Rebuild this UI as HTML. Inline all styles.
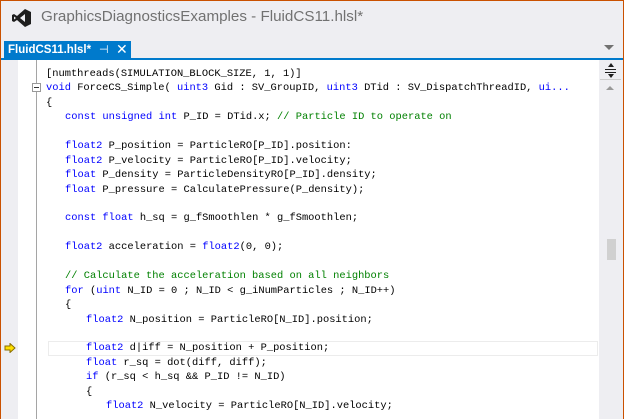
<!DOCTYPE html>
<html><head><meta charset="utf-8"><style>
*{margin:0;padding:0;box-sizing:border-box}
body{width:624px;height:419px;overflow:hidden;background:#eeeef2;position:relative;font-family:"Liberation Sans",sans-serif}
.bd{position:absolute;inset:0;border:1px solid #ca5100;border-bottom:none;pointer-events:none;z-index:10}
.title{position:absolute;left:41px;top:8px;font-size:15.2px;color:#717171}
.tab{position:absolute;left:4px;top:41px;width:127px;height:18px;background:#007acc;color:#fff;font-size:11.5px;font-weight:bold;line-height:18px;padding-left:4px}
.tab span{position:absolute;font-weight:normal}
.bl{position:absolute;left:1px;right:1px;top:58px;height:2px;background:#007acc}
.ed{position:absolute;left:18px;top:60px;width:581px;height:359px;background:#fff}
.gut{position:absolute;left:36px;top:60px;width:1px;height:359px;background:#a5a5a5}
.sb{position:absolute;left:599px;top:60px;width:23px;height:359px;background:#eeeef2}
.code{position:absolute;left:0;top:67px;font-family:"Liberation Mono",monospace;font-size:10.4px;color:#000;white-space:pre}
.code div{height:14.45px;line-height:14.45px;position:absolute;white-space:pre}
.k{color:#0000ff}.c{color:#008000}
.hl{position:absolute;left:48px;top:341px;width:550px;height:15px;border:1px solid #ececec}
</style></head><body>
<div class="bd"></div>
<svg style="position:absolute;left:11px;top:8px" width="21" height="20" viewBox="0 0 21 20"><path d="M14 1 L20 4 V16 L14 19 L6 12 L3 14 L1 13 V7 L3 6 L6 8 Z M14 6 L9 10 L14 14 Z M3 8.5 V11.5 L5 10 Z" fill="#1e1e1e" fill-rule="evenodd"/></svg>
<div class="title">GraphicsDiagnosticsExamples - FluidCS11.hlsl*</div>
<div class="tab">FluidCS11.hlsl*<span style="left:95px;font-size:11px">⊣</span><span style="left:112px;font-size:14px;top:-1px">✕</span></div>
<div style="position:absolute;left:604px;top:45px;width:0;height:0;border-left:5px solid transparent;border-right:5px solid transparent;border-top:5px solid #717171"></div>
<div class="bl"></div>
<div class="ed"></div>
<div class="gut"></div>
<div class="sb">
 <div style="position:absolute;left:6px;top:9px;width:11px;height:1px;background:#1e1e1e"></div>
 <div style="position:absolute;left:6px;top:12px;width:11px;height:1px;background:#1e1e1e"></div>
 <div style="position:absolute;left:9px;top:3px;border-left:3px solid transparent;border-right:3px solid transparent;border-bottom:4px solid #1e1e1e"></div>
 <div style="position:absolute;left:9px;top:14px;border-left:3px solid transparent;border-right:3px solid transparent;border-top:4px solid #1e1e1e"></div>
 <div style="position:absolute;left:1px;top:19px;width:21px;height:1px;background:#ccc"></div>
 <div style="position:absolute;left:7px;top:26px;border-left:4px solid transparent;border-right:4px solid transparent;border-bottom:4px solid #999"></div>
 <div style="position:absolute;left:8px;top:179px;width:9px;height:21px;background:#d0d0d0"></div>
</div>
<div style="position:absolute;left:32px;top:83px;width:9px;height:9px;border:1px solid #999;background:#fff"><div style="position:absolute;left:1px;top:3px;width:5px;height:1px;background:#333"></div></div>
<div class="hl"></div>
<svg style="position:absolute;left:4px;top:343px" width="12" height="10" viewBox="0 0 12 10"><path d="M1 3 H6 V0.5 L11 5 L6 9.5 V7 H1 Z" fill="#ffe000" stroke="#8a6d00" stroke-width="1"/></svg>
<div class="code">
<div style="top:0;left:46px">[numthreads(SIMULATION_BLOCK_SIZE, 1, 1)]</div>
<div style="top:14.4px;left:46px"><span class="k">void</span> ForceCS_Simple( <span class="k">uint3</span> Gid : SV_GroupID, <span class="k">uint3</span> DTid : SV_DispatchThreadID, <span class="k">ui...</span></div>
<div style="top:28.8px;left:46px">{</div>
<div style="top:43.3px;left:65px"><span class="k">const unsigned int</span> P_ID = DTid.x; <span class="c">// Particle ID to operate on</span></div>
<div style="top:72.2px;left:65px"><span class="k">float2</span> P_position = ParticleRO[P_ID].position:</div>
<div style="top:86.6px;left:65px"><span class="k">float2</span> P_velocity = ParticleRO[P_ID].velocity;</div>
<div style="top:101px;left:65px"><span class="k">float</span> P_density = ParticleDensityRO[P_ID].density;</div>
<div style="top:115.5px;left:65px"><span class="k">float</span> P_pressure = CalculatePressure(P_density);</div>
<div style="top:144.4px;left:65px"><span class="k">const float</span> h_sq = g_fSmoothlen * g_fSmoothlen;</div>
<div style="top:173.3px;left:65px"><span class="k">float2</span> acceleration = <span class="k">float2</span>(0, 0);</div>
<div style="top:202.2px;left:65px"><span class="c">// Calculate the acceleration based on all neighbors</span></div>
<div style="top:216.6px;left:65px"><span class="k">for</span> (<span class="k">uint</span> N_ID = 0 ; N_ID &lt; g_iNumParticles ; N_ID++)</div>
<div style="top:231px;left:65px">{</div>
<div style="top:245.5px;left:86px"><span class="k">float2</span> N_position = ParticleRO[N_ID].position;</div>
<div style="top:274.4px;left:86px"><span class="k">float2</span> d|iff = N_position + P_position;</div>
<div style="top:288.8px;left:86px"><span class="k">float</span> r_sq = dot(diff, diff);</div>
<div style="top:303.3px;left:86px"><span class="k">if</span> (r_sq &lt; h_sq &amp;&amp; P_ID != N_ID)</div>
<div style="top:317.7px;left:86px">{</div>
<div style="top:332.1px;left:106px"><span class="k">float2</span> N_velocity = ParticleRO[N_ID].velocity;</div>
</div>
</body></html>
